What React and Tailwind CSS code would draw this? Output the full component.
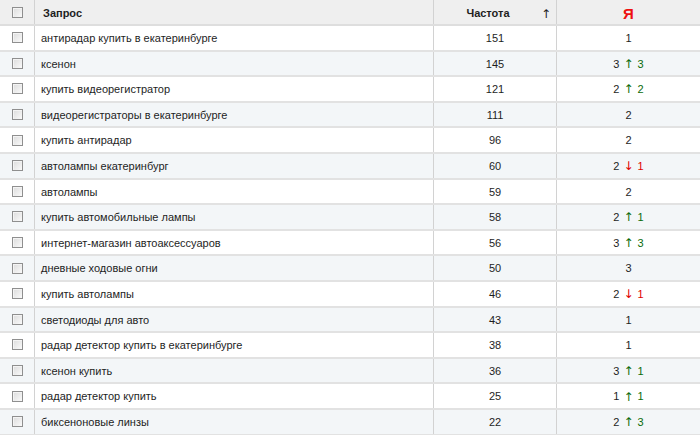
import React from 'react';

const rows = [
  ['антирадар купить в екатеринбурге', 151, 1],
  ['ксенон', 145, 3, 'up', 3],
  ['купить видеорегистратор', 121, 2, 'up', 2],
  ['видеорегистраторы в екатеринбурге', 111, 2],
  ['купить антирадар', 96, 2],
  ['автолампы екатеринбург', 60, 2, 'down', 1],
  ['автолампы', 59, 2],
  ['купить автомобильные лампы', 58, 2, 'up', 1],
  ['интернет-магазин автоаксессуаров', 56, 3, 'up', 3],
  ['дневные ходовые огни', 50, 3],
  ['купить автолампы', 46, 2, 'down', 1],
  ['светодиоды для авто', 43, 1],
  ['радар детектор купить в екатеринбурге', 38, 1],
  ['ксенон купить', 36, 3, 'up', 1],
  ['радар детектор купить', 25, 1, 'up', 1],
  ['биксеноновые линзы', 22, 2, 'up', 3],
];

const arrowFont = { fontFamily: '"DejaVu Sans", sans-serif' };

function Checkbox() {
  return (
    <span className="block w-[11px] h-[11px] border border-[#8f8f8f] bg-gradient-to-br from-[#dcdcdc] to-[#fafafa] shadow-[inset_1px_1px_0_#f4f4f4]" />
  );
}

function Position({ pos, dir, delta }) {
  if (!dir) return <span>{pos}</span>;
  const up = dir === 'up';
  return (
    <span className="flex items-center gap-[4px]">
      <span>{pos}</span>
      <span className={up ? 'text-[#0a6b0a] text-[12px]' : 'text-[#e00000] text-[12px]'} style={arrowFont}>{up ? '↑' : '↓'}</span>
      <span className={up ? 'text-[#0a6b0a]' : 'text-[#e00000]'}>{delta}</span>
    </span>
  );
}

export default function App() {
  return (
    <div className="w-[700px] h-[435px] overflow-hidden bg-white text-[11px] text-[#1e1e1e]" style={{ fontFamily: '"Liberation Sans", Arial, sans-serif' }}>
      <div className="flex h-[26px] bg-[#efefef] border-b-2 border-[#dedede]">
        <div className="w-[35px] shrink-0 flex items-center justify-center border-r border-[#d2d2d2]">
          <Checkbox />
        </div>
        <div className="w-[399px] shrink-0 flex items-center pl-[8px] pt-[2px] font-bold border-r border-[#d2d2d2]">Запрос</div>
        <div className="w-[123px] shrink-0 relative flex items-center justify-center pr-[14px] pt-[2px] font-bold border-r border-[#d2d2d2]">
          Частота
          <span className="absolute right-[5px] top-[5px] font-normal text-[12px]" style={arrowFont}>↑</span>
        </div>
        <div className="flex-1 flex items-center justify-center pt-[2px]">
          <span className="text-[#ee1111] font-bold text-[15px] leading-none" style={{ fontFamily: '"Liberation Sans", sans-serif' }}>Я</span>
        </div>
      </div>
      {rows.map(([q, f, pos, dir, delta], i) => (
        <div key={i} className={`flex h-[25.6px] border-b-2 border-[#e2e2e2] ${i % 2 ? 'bg-[#f3f6f8]' : 'bg-white'}`}>
          <div className="w-[35px] shrink-0 flex items-center justify-center border-r border-[#d2d2d2]">
            <Checkbox />
          </div>
          <div className="w-[399px] shrink-0 flex items-center pl-[6px] pt-[1px] border-r border-[#d2d2d2]">{q}</div>
          <div className="w-[123px] shrink-0 flex items-center justify-center pt-[1px] border-r border-[#d2d2d2]">{f}</div>
          <div className="flex-1 flex items-center justify-center pt-[1px]">
            <Position pos={pos} dir={dir} delta={delta} />
          </div>
        </div>
      ))}
    </div>
  );
}
